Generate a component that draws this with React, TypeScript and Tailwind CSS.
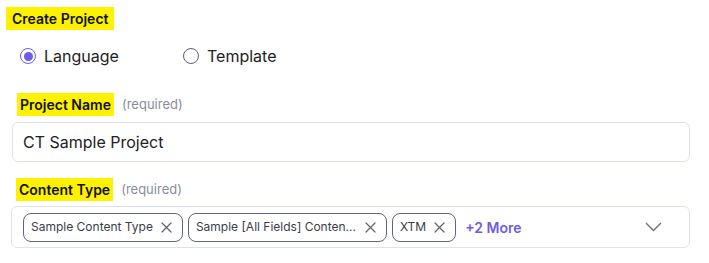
const tags = ["Sample Content Type", "Sample [All Fields] Content Type", "XTM"];

function Radio({ label, checked }: { label: string; checked?: boolean }) {
  return (
    <label className="flex items-center gap-2 w-[163px] cursor-pointer">
      <span
        className={`w-4 h-4 rounded-full border-[1.5px] flex items-center justify-center ${
          checked ? "border-[#6c5ce7]" : "border-[#5d6172]"
        }`}
      >
        {checked && <span className="w-[9px] h-[9px] rounded-full bg-[#6c5ce7]" />}
      </span>
      <span className="text-[16px] text-[#222222]">{label}</span>
    </label>
  );
}

function FieldLabel({ text }: { text: string }) {
  return (
    <div className="flex items-center ml-[5px] h-[23px]">
      <span className="bg-[#fff200] px-[3px] h-[23px] leading-[23px] text-[14px] font-semibold text-[#111111]">
        {text}
      </span>
      <span className="ml-[8px] text-[13px] text-[#8a8d99]">(required)</span>
    </div>
  );
}

function CloseIcon() {
  return (
    <svg width="11" height="11" viewBox="0 0 11 11" fill="none" className="shrink-0">
      <path d="M1 1L10 10M10 1L1 10" stroke="#5d6172" strokeWidth="1.2" strokeLinecap="round" />
    </svg>
  );
}

export default function App() {
  return (
    <div
      className="w-[690px] pl-3 pt-[6px] bg-white"
      style={{ fontFamily: "Inter, 'Noto Sans', sans-serif" }}
    >
      {/* Title */}
      <div className="-ml-1.5">
        <span className="inline-block bg-[#fff200] px-1.5 h-[23px] leading-[23px] text-[14px] font-semibold text-[#111111]">
          Create Project
        </span>
      </div>

      {/* Radios */}
      <div className="flex items-center ml-2 mt-[14px] h-6">
        <Radio label="Language" checked />
        <Radio label="Template" />
      </div>

      {/* Project name */}
      <div className="mt-[25px]">
        <FieldLabel text="Project Name" />
      </div>
      <div className="mt-[6px] h-[40px] border border-[#dde2ec] rounded-md flex items-center pl-[10px]">
        <span className="text-[16px] text-[#222222]">CT Sample Project</span>
      </div>

      {/* Content type */}
      <div className="mt-[16px] -ml-px">
        <FieldLabel text="Content Type" />
      </div>
      <div className="mt-[5px] -ml-px h-[42px] border border-[#dde2ec] rounded-md flex items-center pl-[11px] pr-[27px]">
        <div className="flex items-center gap-[5px] flex-1">
          {tags.map((t) => (
            <span
              key={t}
              className="flex items-center h-[29px] border border-[#62667a] rounded-lg pl-[7px] pr-[10px] gap-[8px] text-[12px] text-[#3a3d4a]"
            >
              <span className="truncate max-w-[161px]">{t}</span>
              <CloseIcon />
            </span>
          ))}
          <span className="ml-[4px] text-[14px] font-semibold text-[#6c5ce7]">+2 More</span>
        </div>
        <svg width="17" height="10" viewBox="0 0 17 10" fill="none">
          <polyline points="1,1 8.5,8.5 16,1" stroke="#6b6f80" strokeWidth="1.4" />
        </svg>
      </div>
    </div>
  );
}
